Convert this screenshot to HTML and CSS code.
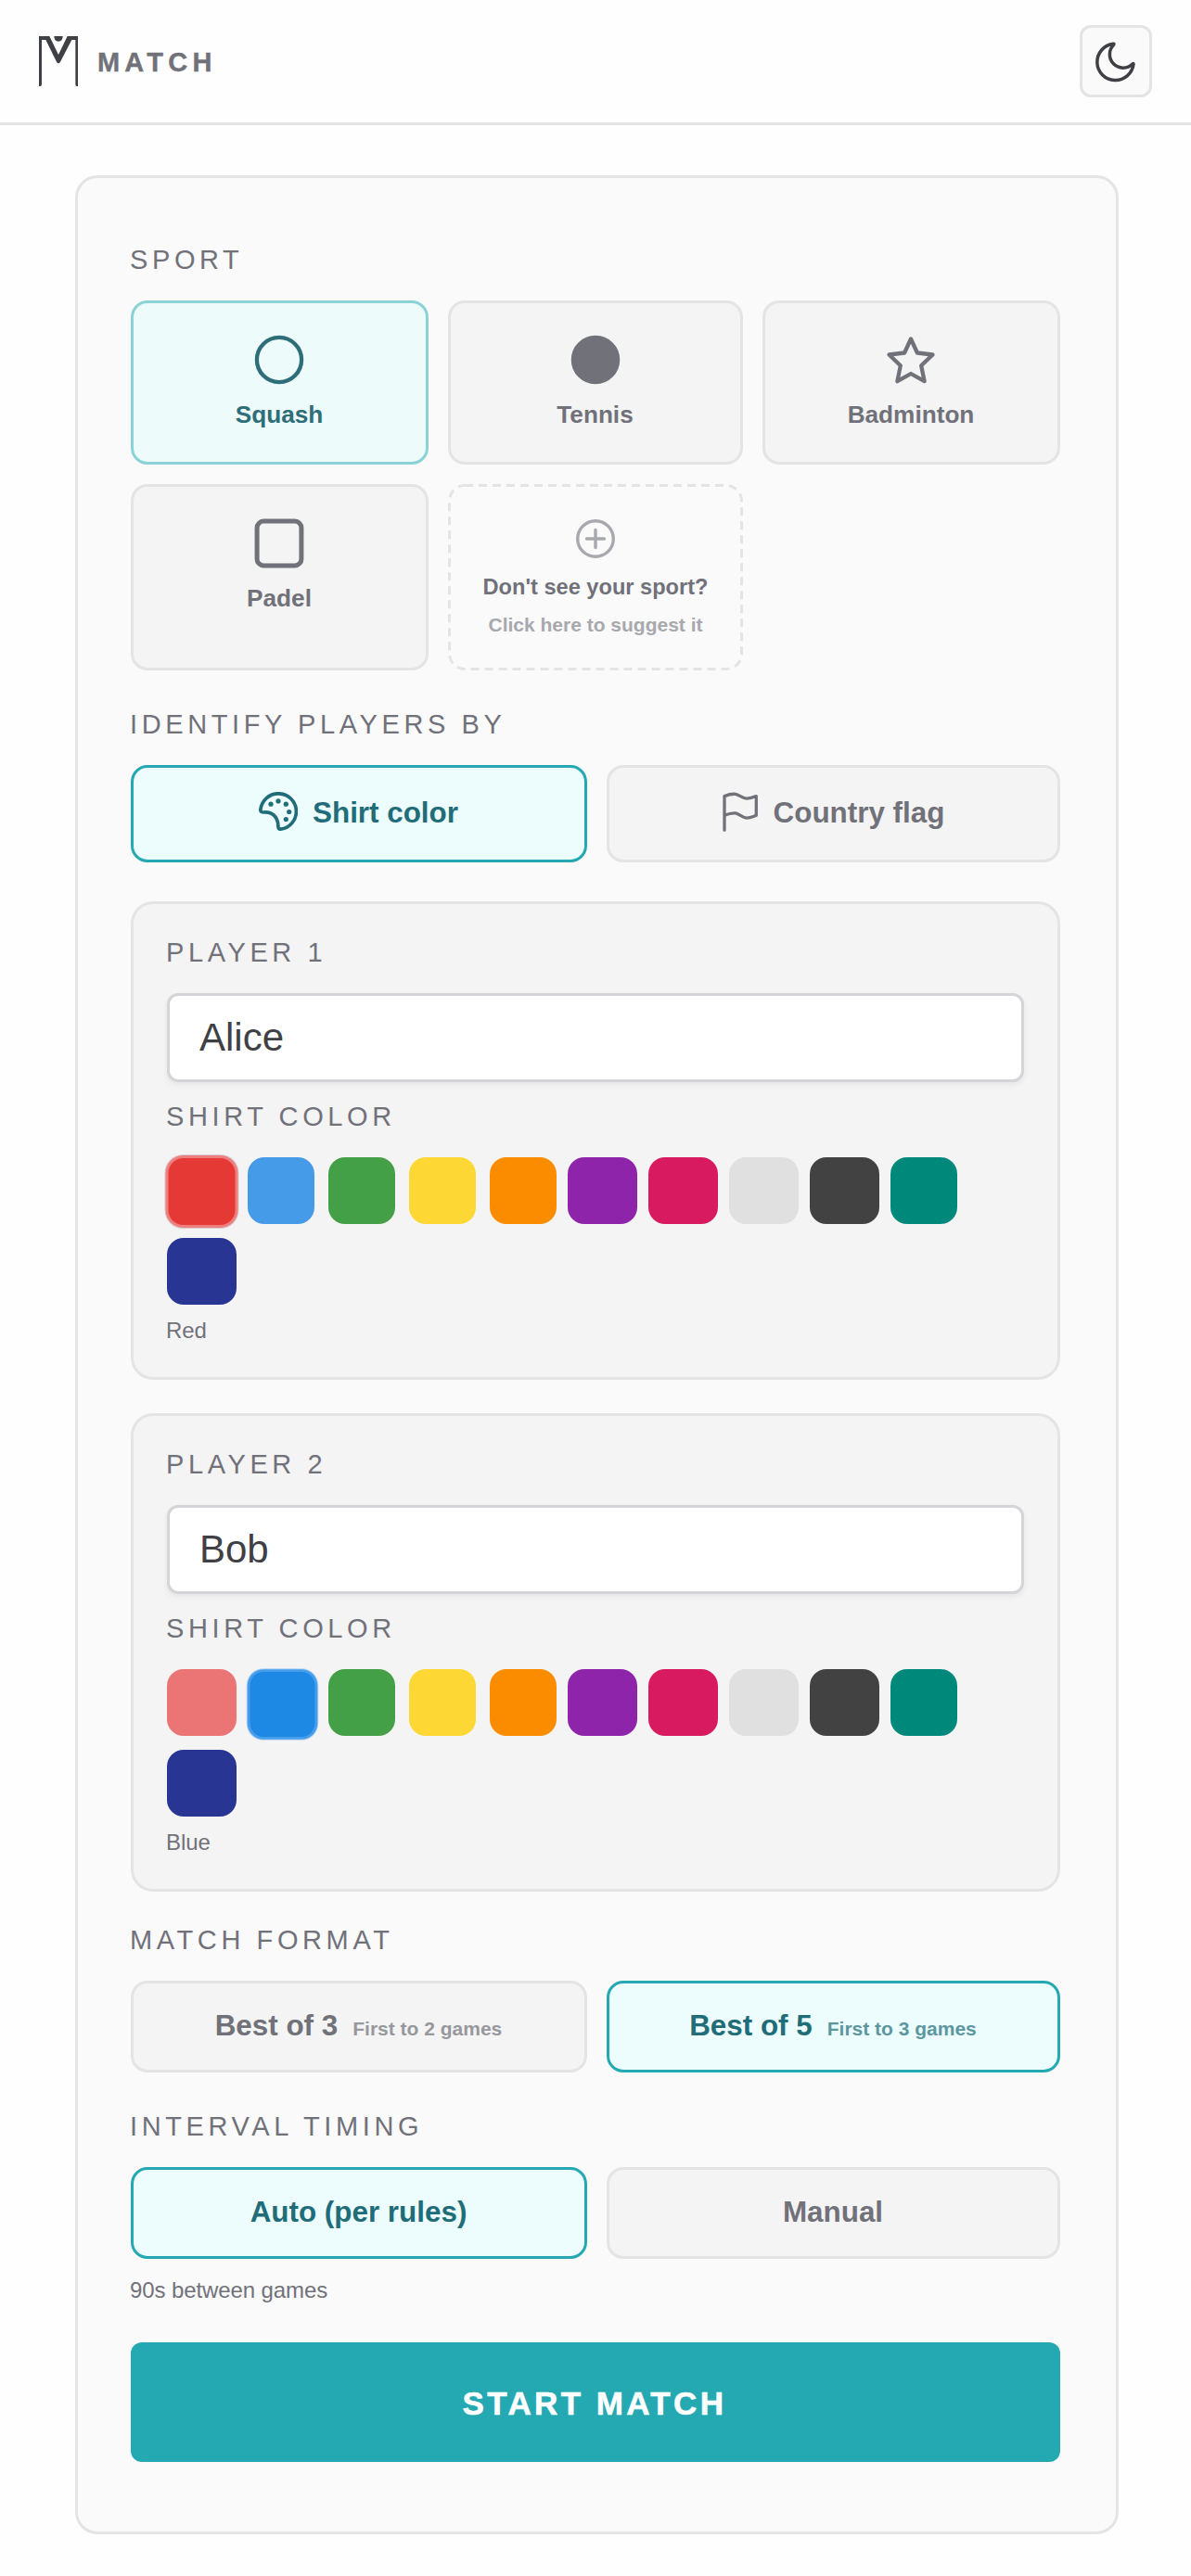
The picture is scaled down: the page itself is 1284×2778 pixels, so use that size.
FILE: index.html
```html
<!DOCTYPE html>
<html lang="en">
<head>
    <meta charset="UTF-8">
    <meta name="viewport" content="width=device-width, initial-scale=1.0">
    <title>Match</title>
    <link rel="stylesheet" href="styles.css">
</head>
<body>
    <header class="header">
        <div class="brand">
            <svg class="logo" viewBox="126 117 126 162" fill="#3f3f46">
                <path d="M126 117H160L189 177L218 117H252V279H249Q244 279 244 273V129H232L195 200Q189 210 183 200L148 129H135V273Q135 279 130 279H126Z"/>
                <path d="M175 117H203Q203 134 189 134Q175 134 175 117Z"/>
            </svg>
            <span class="brand-name">MATCH</span>
        </div>
        <button type="button" class="theme-btn" aria-label="Toggle theme">
            <svg class="moon" viewBox="285 127 138 138">
                <path d="M346 140A59 59 0 1 0 411 206Q412 202 408 205A43 43 0 0 1 347 143Q349 139 346 140Z"/>
            </svg>
        </button>
    </header>

    <main class="setup-card">
        <div class="label">SPORT</div>
        <div class="sport-grid">
            <button type="button" class="sport active">
                <svg class="sport-icon" viewBox="0 0 54 54"><circle cx="27" cy="27" r="24.1"/></svg>
                <span>Squash</span>
            </button>
            <button type="button" class="sport">
                <svg class="sport-icon" viewBox="0 0 54 54"><circle cx="27" cy="27" r="24.1" fill="currentColor"/></svg>
                <span>Tennis</span>
            </button>
            <button type="button" class="sport">
                <svg class="sport-icon star" viewBox="0 0 54 54"><path d="M27 4.5L33.9 19.5L50.5 21.5L38.2 33.3L41.6 50.2L27 42L12.4 50.2L15.8 33.3L3.5 21.5L20.1 19.5Z"/></svg>
                <span>Badminton</span>
            </button>
            <button type="button" class="sport">
                <svg class="sport-icon square" viewBox="0 0 54 54"><rect x="3.1" y="3.1" width="47.8" height="47.8" rx="7"/></svg>
                <span>Padel</span>
            </button>
            <button type="button" class="sport suggest">
                <svg class="dashes" viewBox="0 0 318 201"><rect x="1.5" y="1.5" width="315" height="198" rx="16.5"/></svg>
                <svg class="plus-icon" viewBox="0 0 42 42"><circle cx="21" cy="21" r="19.3"/><path d="M21 11.5V30.5M11.5 21H30.5"/></svg>
                <span class="suggest-title">Don't see your sport?</span>
                <span class="suggest-sub">Click here to suggest it</span>
            </button>
        </div>

        <div class="label spaced">IDENTIFY PLAYERS BY</div>
        <div class="option-row tall">
            <button type="button" class="option active">
                <svg class="palette" viewBox="0 0 42 43">
                    <path d="M1.9 19A19.3 19.3 0 1 1 23.7 40.2C21.5 40.4 20.9 39 20.8 36.5C20.7 27 14.5 21.3 5.5 22C2.8 22 1.6 21.3 1.9 19Z"/>
                    <g class="dots"><circle cx="13" cy="13.2" r="2.6"/><circle cx="21" cy="9.9" r="2.6"/><circle cx="29.3" cy="13.2" r="2.6"/><circle cx="32.7" cy="21.5" r="2.6"/><circle cx="29.3" cy="29.6" r="2.6"/></g>
                </svg>
                <span>Shirt color</span>
            </button>
            <button type="button" class="option">
                <svg class="flag" viewBox="0 0 40 43">
                    <path d="M3 41.2V4.6C7 3 11 2 14.8 2.3C18.5 2.8 23 7.2 27 7.2C30.5 7.2 34 6 37.3 4.6V25.3C34 26.8 30.5 28.2 27 28.2C23 28.2 18.5 23.4 14.8 22.9C11 22.7 7 23.7 3 25.3"/>
                </svg>
                <span>Country flag</span>
            </button>
        </div>

        <section class="player">
            <label class="label" for="player1">PLAYER 1</label>
            <input type="text" id="player1" class="name-input" value="Alice">
            <div class="label shirt-label">SHIRT COLOR</div>
            <div class="swatches">
                <div class="swatch red selected"></div>
                <div class="swatch blue taken"></div>
                <div class="swatch green"></div>
                <div class="swatch yellow"></div>
                <div class="swatch orange"></div>
                <div class="swatch purple wide"></div>
                <div class="swatch pink wide"></div>
                <div class="swatch white wide"></div>
                <div class="swatch black wide"></div>
                <div class="swatch teal"></div>
                <div class="swatch navy wide"></div>
            </div>
            <div class="note color-name">Red</div>
        </section>

        <section class="player">
            <label class="label" for="player2">PLAYER 2</label>
            <input type="text" id="player2" class="name-input" value="Bob">
            <div class="label shirt-label">SHIRT COLOR</div>
            <div class="swatches">
                <div class="swatch red taken wide"></div>
                <div class="swatch blue selected"></div>
                <div class="swatch green"></div>
                <div class="swatch yellow"></div>
                <div class="swatch orange"></div>
                <div class="swatch purple wide"></div>
                <div class="swatch pink wide"></div>
                <div class="swatch white wide"></div>
                <div class="swatch black wide"></div>
                <div class="swatch teal"></div>
                <div class="swatch navy wide"></div>
            </div>
            <div class="note color-name">Blue</div>
        </section>

        <div class="label format-label">MATCH FORMAT</div>
        <div class="option-row">
            <button type="button" class="option format"><span>Best of 3</span><small>First to 2 games</small></button>
            <button type="button" class="option format active"><span>Best of 5</span><small>First to 3 games</small></button>
        </div>

        <div class="label spaced">INTERVAL TIMING</div>
        <div class="option-row">
            <button type="button" class="option active"><span>Auto (per rules)</span></button>
            <button type="button" class="option"><span>Manual</span></button>
        </div>
        <div class="note timing-note">90s between games</div>

        <button type="button" class="start-btn">START MATCH</button>
    </main>
</body>
</html>
```
FILE: styles.css
```css
* {
    box-sizing: border-box;
}
body {
    margin: 0;
    background-color: #fefefe;
    color: #71717a;
    font-family: "Liberation Sans", Arial, sans-serif;
}
button {
    font-family: inherit;
    font-weight: bold;
    color: inherit;
    padding: 0;
    cursor: pointer;
}
svg {
    display: block;
    flex: none;
    fill: none;
    stroke: currentColor;
    stroke-linecap: round;
    stroke-linejoin: round;
}

/* Header */
.header {
    height: 135px;
    padding: 0 42px;
    border-bottom: 3px solid #e4e4e5;
    display: flex;
    align-items: center;
    justify-content: space-between;
}
.brand {
    display: flex;
    align-items: center;
    gap: 21px;
}
.logo {
    width: 42px;
    height: 54px;
    fill: #3f3f46;
    stroke: none;
}
.brand-name {
    font-size: 29px;
    line-height: 33px;
    font-weight: bold;
    letter-spacing: 5.2px;
    margin-top: 3px;
    -webkit-text-stroke: 0.4px currentColor;
}
.theme-btn {
    width: 78px;
    height: 78px;
    border: 3px solid #e4e4e6;
    border-radius: 12px;
    background-color: #fafafa;
    color: #3f3f46;
    display: flex;
    align-items: center;
    justify-content: center;
}
.moon {
    width: 46px;
    height: 46px;
    stroke-width: 10.5;
}

/* Card */
.setup-card {
    width: 1125px;
    margin: 54px 0 45px 81px;
    padding: 73px 60px 75px 57px;
    border: 3px solid #e4e4e5;
    border-radius: 24px;
    background-color: #fafafa;
}
.label {
    display: block;
    font-size: 29px;
    line-height: 31px;
    letter-spacing: 4.6px;
    margin-left: -1px;
    margin-bottom: 28px;
}
.label.spaced {
    margin-top: 43px;
}
.format-label {
    margin-top: 37px;
}
.note {
    font-size: 24px;
    line-height: 27px;
    letter-spacing: -0.1px;
    margin-left: -1px;
}

/* Sports */
.sport-grid {
    display: grid;
    grid-template-columns: 321px 318px 321px;
    grid-template-rows: 177px 201px;
    gap: 21px;
}
.sport {
    display: flex;
    flex-direction: column;
    align-items: center;
    padding-top: 34px;
    padding-right: 1px;
    border: 3px solid #e4e4e6;
    border-radius: 18px;
    background-color: #f4f4f4;
    font-size: 26.2px;
    line-height: 30px;
}
.sport.active {
    border-color: #8bd2d6;
    background-color: #eefbfb;
    color: #2d6e79;
}
.sport-icon {
    width: 54px;
    height: 54px;
    stroke-width: 4.3;
    margin-bottom: 17px;
}
.sport-icon.square {
    stroke-width: 5;
}
.sport.suggest {
    position: relative;
    border-color: transparent;
    background-color: transparent;
    padding-top: 35px;
    padding-right: 0;
}
.dashes {
    position: absolute;
    top: -3px;
    left: -3px;
    width: 318px;
    height: 201px;
    color: #e4e4e6;
    stroke-width: 3;
    stroke-linecap: butt;
    stroke-dasharray: 9 6;
}
.plus-icon {
    width: 42px;
    height: 42px;
    stroke-width: 3.4;
    color: #a8a8af;
}
.suggest-title {
    font-size: 23.6px;
    line-height: 27px;
    margin-top: 18px;
}
.suggest-sub {
    font-size: 21px;
    line-height: 24px;
    margin-top: 15px;
    color: #a8a8af;
}

/* Two-way options */
.option-row {
    display: grid;
    grid-template-columns: 492px 489px;
    gap: 21px;
    height: 99px;
}
.option-row.tall {
    height: 105px;
}
.option {
    display: flex;
    align-items: center;
    justify-content: center;
    gap: 16px;
    padding-right: 1px;
    border: 3px solid #e4e4e6;
    border-radius: 18px;
    background-color: #f4f4f4;
    font-size: 31.4px;
    line-height: 36px;
}
.option span {
    margin-bottom: 2px;
}
.option.active {
    border-color: #24a9b3;
    background-color: #edfcfc;
    color: #206d79;
}
.option.format {
    align-items: baseline;
    padding-top: 28px;
}
.option small {
    font-size: 21px;
    line-height: 24px;
    opacity: 0.7;
}
.palette {
    width: 42px;
    height: 43px;
    margin-bottom: 4px;
    stroke-width: 3.7;
}
.dots {
    fill: currentColor;
    stroke: none;
}
.flag {
    width: 40px;
    height: 43px;
    margin-bottom: 4px;
    stroke-width: 3.3;
}

/* Players */
.player {
    margin-top: 42px;
    padding: 37px 36px;
    border: 3px solid #e4e4e6;
    border-radius: 24px;
    background-color: #f4f4f4;
}
.player + .player {
    margin-top: 36px;
}
.name-input {
    display: block;
    width: 924px;
    height: 96px;
    padding: 0 32px;
    border: 3px solid #d4d4d9;
    border-radius: 12px;
    background-color: #fff;
    box-shadow: 0 3px 6px rgba(0, 0, 0, 0.06);
    font-family: inherit;
    font-size: 42px;
    color: #3f3f46;
    outline: none;
}
.shirt-label {
    margin-top: 22px;
}
.swatches {
    display: grid;
    grid-template-columns: 87px 87px 87px 87px 84px 87px 87px 87px 87px 72px;
    row-gap: 15px;
}
.swatch {
    width: 72px;
    height: 72px;
    border-radius: 18px;
}
.swatch.wide {
    width: 75px;
}
.red { background-color: #e53935; }
.blue { background-color: #1e88e5; }
.green { background-color: #43a047; }
.yellow { background-color: #fdd835; }
.orange { background-color: #fb8c00; }
.purple { background-color: #8e24aa; }
.pink { background-color: #d81b60; }
.white { background-color: #e0e0e0; }
.black { background-color: #424242; }
.teal { background-color: #00897b; }
.navy { background-color: #283593; }
.blue.taken { background-color: #459be8; }
.red.taken { background-color: #eb7575; }
.red.selected {
    border-radius: 16px;
    box-shadow: 0 0 0 3px #ef7f7e, 0 0 0 4px #d9c9c9;
    transform: translate(1.5px, 1px);
}
.blue.selected {
    border-radius: 15px;
    box-shadow: 0 0 0 3px #459dec, 0 0 0 4px #b4d3ef;
    transform: translate(1.5px, 2px) scale(0.97);
}
.color-name {
    margin-top: 14px;
}
.timing-note {
    margin-top: 20px;
    margin-bottom: 43px;
}
.start-btn {
    display: block;
    width: 100%;
    height: 129px;
    padding: 2px 2px 0 0;
    border: none;
    border-radius: 12px;
    background-color: #24a9b3;
    color: #fff;
    font-size: 35px;
    letter-spacing: 3.4px;
    -webkit-text-stroke: 0.6px currentColor;
}
```
